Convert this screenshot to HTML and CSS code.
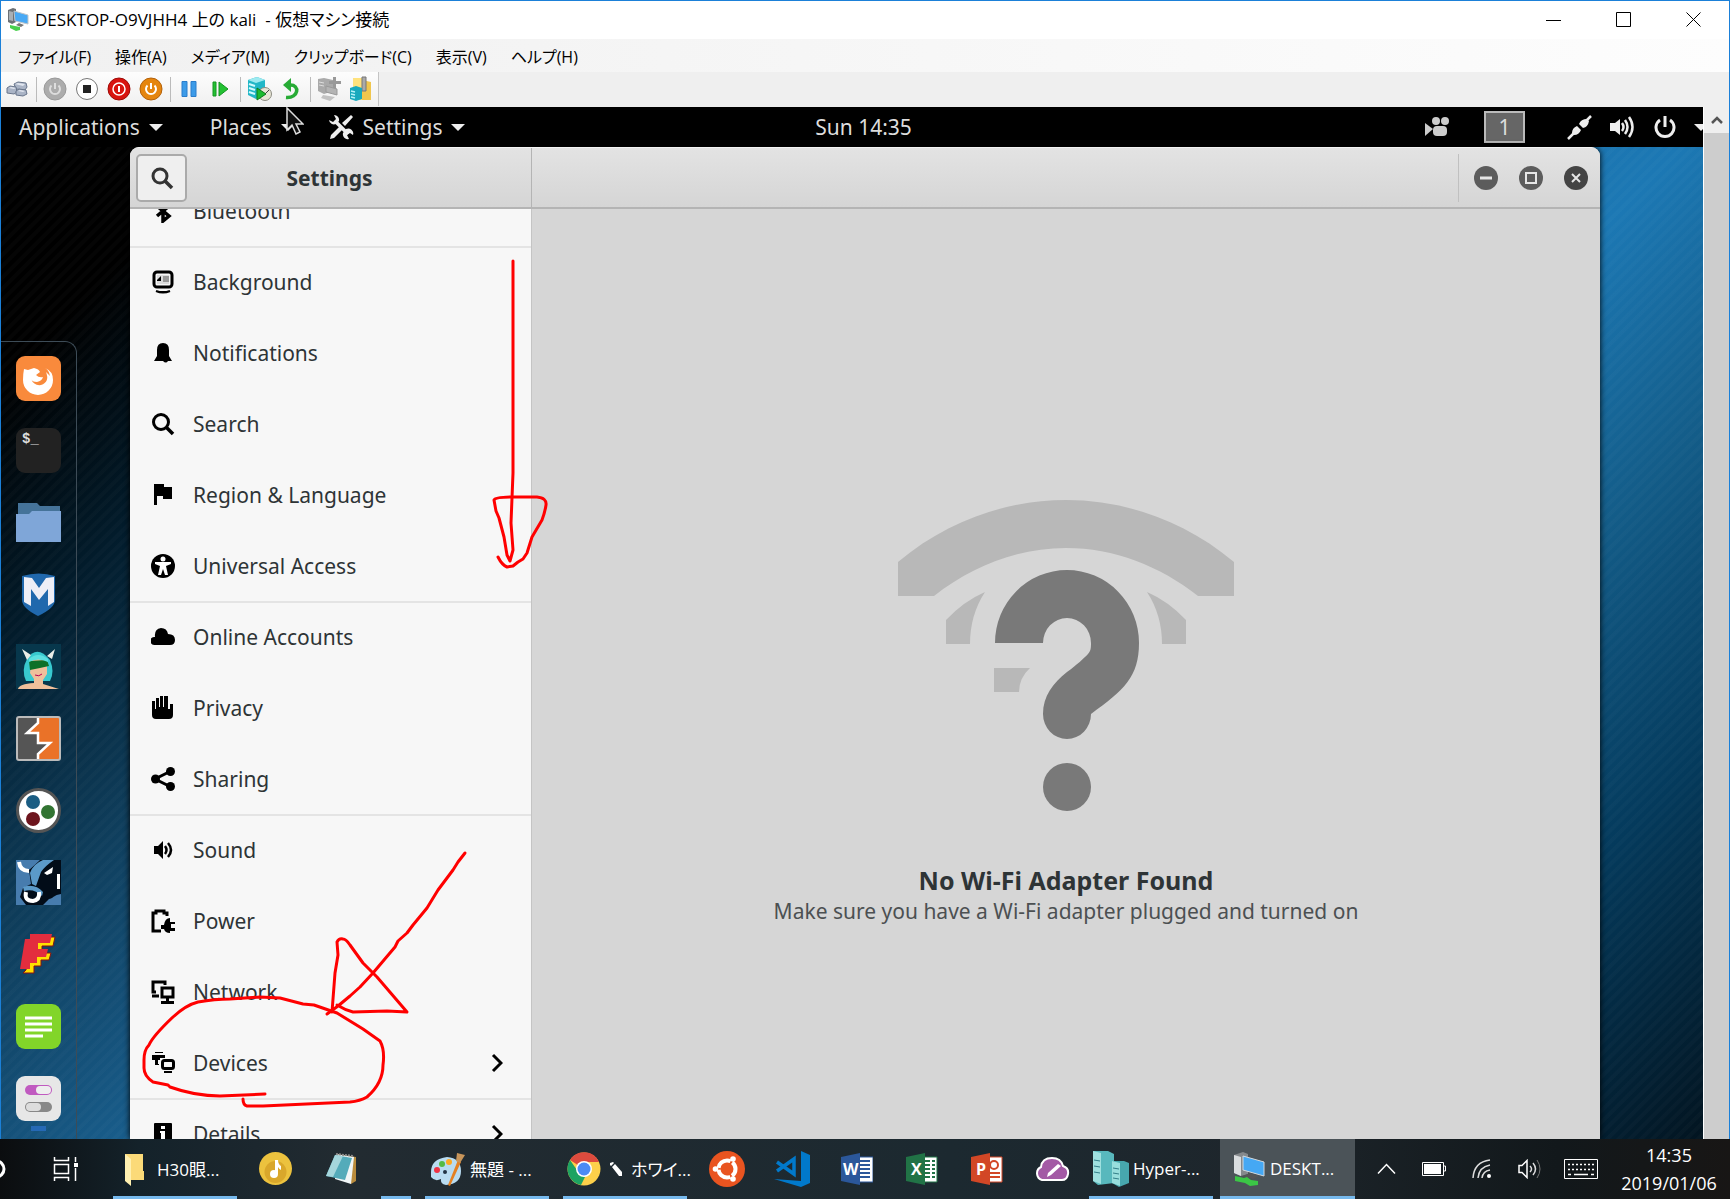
FILE: index.html
```html
<!DOCTYPE html>
<html lang="ja">

<head>
    <meta charset="UTF-8">
    <meta name="viewport" content="width=device-width, initial-scale=1.0">
    <title>DESKTOP-O9VJHH4 上の kali - 仮想マシン接続</title>
    <link rel="stylesheet" href="styles.css">
</head>

<body>
    <div class="vmconnect">
        <header class="titlebar">
            <svg width="22" height="24" viewBox="0 0 22 24">
                <path d="M1 2l5-2 3 1v13l-4 2-4-2z" fill="#6b7075" />
                <path d="M2 3l4 1v9l-4-1z" fill="#a9afb4" />
                <path d="M7 3l14 4v9L8 13z" fill="#48a9f5" stroke="#bfc5c9" />
                <path d="M12 15l5 2-3 2-5-2z" fill="#777" />
                <path d="M3 17l10 2v3l-4 1-6-3z" fill="#48cf4d" />
            </svg>
            <h1>DESKTOP-O9VJHH4 上の kali &nbsp;- 仮想マシン接続</h1>
            <div class="win-buttons">
                <button aria-label="minimize"><svg width="16" height="16"><path d="M0 8.500H15" /></svg></button>
                <button aria-label="maximize"><svg width="16" height="16"><path d="M.5.5h14v14H.5z" /></svg></button>
                <button aria-label="close"><svg width="16" height="16"><path d="M.5.5l14 14M14.500.5l-14 14" /></svg></button>
            </div>
        </header>

        <nav class="menubar">
            <button>ファイル(F)</button>
            <button>操作(A)</button>
            <button>メディア(M)</button>
            <button>クリップボード(C)</button>
            <button>表示(V)</button>
            <button>ヘルプ(H)</button>
        </nav>

        <div class="toolbar">
            <div class="tools">
                <button aria-label="Ctrl+Alt+Del"><svg width="24" height="24" viewBox="0 0 24 24">
                    <g fill="#aab4c6" stroke="#68758b">
                        <path d="M9 7l4-2 8 1 1 4-2 3-9-1z" /><path d="M2 11l3-2 6 1 1 5-3 2-7-1z" /><path d="M11 14l3-2 7 1 1 4-4 2-7-1z" />
                    </g>
                    <path d="M10 7l3-1 7 1-2 2zM4 11l2-1 5 1-2 1zM13 14l2-1 5 1-2 1z" fill="#e1e6ef" />
                </svg></button>
                <i></i>
                <button aria-label="start"><svg width="24" height="24" viewBox="0 0 24 24"><circle cx="12" cy="12" r="11" fill="#acacac" stroke="#999" /><path d="M8.500 8.500a5 5 0 1 0 7 0M12 6v6" fill="none" stroke="#ddd" stroke-width="2" /></svg></button>
                <button aria-label="turn off"><svg width="24" height="24" viewBox="0 0 24 24"><circle cx="12" cy="12" r="10.500" fill="#fff" stroke="#777" /><path d="M8 8h8v8H8z" fill="#222" /></svg></button>
                <button aria-label="shut down"><svg width="24" height="24" viewBox="0 0 24 24"><circle cx="12" cy="12" r="11" fill="#d8140f" stroke="#9d0b08" /><circle cx="12" cy="12" r="6" fill="none" stroke="#fff" stroke-width="1.500" /><path d="M12 9v6" stroke="#fff" stroke-width="2" /></svg></button>
                <button aria-label="save"><svg width="24" height="24" viewBox="0 0 24 24"><circle cx="12" cy="12" r="11" fill="#e5850e" stroke="#b3610a" /><path d="M8.500 8.500a5 5 0 1 0 7 0M12 6v6" fill="none" stroke="#fff" stroke-width="2" /></svg></button>
                <i></i>
                <button aria-label="pause"><svg width="24" height="24" viewBox="0 0 24 24"><path d="M5 4.500h5v15H5zM14 4.500h5v15h-5z" fill="#3c9be8" stroke="#2b7dcb" /></svg></button>
                <button aria-label="reset"><svg width="24" height="24" viewBox="0 0 24 24"><path d="M4 5h3v14H4zM10 5l9 7-9 7z" fill="#23c132" stroke="#149421" /></svg></button>
                <i></i>
                <button aria-label="checkpoint"><svg width="26" height="26" viewBox="0 0 26 26">
                    <path d="M2 4l9-3 8 3v15l-9 4-8-4z" fill="#22b7c7" /><path d="M2 4l9-3 8 3-9 3z" fill="#9deaf0" />
                    <path d="M3 8l6 2M3 12l6 2M3 16l6 2" stroke="#d2fbff" stroke-width="2" />
                    <circle cx="19" cy="18" r="6.500" fill="#e8e5d5" stroke="#8b8b80" /><path d="M19 18l4-4" stroke="#444" />
                    <path d="M11 12l9 6-9 6z" fill="#1dbb2f" stroke="#0d7a1a" />
                </svg></button>
                <button aria-label="revert"><svg width="24" height="24" viewBox="0 0 24 24"><path d="M7 20.500c13 1 14-13 4-12.500" fill="none" stroke="#27ab35" stroke-width="3.500" /><path d="M4 8l8-7v14z" fill="#27ab35" /></svg></button>
                <i></i>
                <button aria-label="enhanced session"><svg width="24" height="24" viewBox="0 0 24 24"><path d="M1 2l6-1 9 2v11l-9 3-6-3z" fill="#aaa" /><path d="M2 5l5 1M2 8l5 1" stroke="#ddd" /><path d="M16 0h3v4h5v3h-5v5h-3V7h-4V4h4z" fill="#999" /><path d="M9 9l11 3v6L9 15z" fill="#b4b4b4" stroke="#999" /><path d="M6 18l12 2-5 4-9-3z" fill="#c2c2c2" /></svg></button>
                <button aria-label="share"><svg width="24" height="26" viewBox="0 0 24 26"><path d="M4 2h9v22H4z" fill="#ffe27d" /><path d="M13 4l9 2v18h-9z" fill="#f0c64d" /><path d="M13 1h4v14h-4z" fill="#aaa" stroke="#777" /><path d="M1 12l6-2 6 2v11l-6 2-6-2z" fill="#19a9bd" /><path d="M2 15l4 1M2 18l4 1M2 21l4 1" stroke="#b4f2f8" stroke-width="1.500" /></svg></button>
            </div>
        </div>

        <div class="viewport">
            <div class="screen">
                <div class="topbar">
                    <div class="top-menus">
                        <button>Applications <b class="caret"></b></button>
                        <button>Places <b class="caret"></b></button>
                        <button class="app-menu"><svg width="26" height="26" viewBox="0 0 26 26"><path d="M7 7l13 13" stroke="#eee" stroke-width="3.500" /><path d="M1 6a5 5 0 0 0 7 4l3-3A5 5 0 0 0 6 1l2 4-3 3zM15 19a5 5 0 0 0 6 6l-2-4 3-2 3 2a5 5 0 0 0-7-6z" fill="#eee" /><path d="M23 1l2 2-8 9-3-3zM12 12l3 3-9 9-4 1 1-4z" fill="#eee" /></svg>Settings <b class="caret"></b></button>
                    </div>
                    <div class="clock">Sun 14:35</div>
                    <div class="status">
                        <svg width="24" height="20" viewBox="0 0 24 20"><path d="M0 6l8 6-8 7z" fill="#ccc" /><rect x="8" y="9" width="14" height="10" rx="4" fill="#ccc" /><circle cx="11" cy="4" r="4" fill="#ccc" /><circle cx="20" cy="4" r="4" fill="#ccc" /></svg>
                        <span class="workspace">1</span>
                        <svg width="25" height="25" viewBox="0 0 25 25"><path d="M1 24l6-6M18 7l6-6" stroke="#eee" stroke-width="2.500" /><path d="M5 18q0-5 5-7l4 4q-2 5-7 5zM12 9q2-5 8-5l2 2q-1 6-6 7z" fill="#eee" /></svg>
                        <svg width="26" height="24" viewBox="0 0 26 24"><path d="M0 8h5l5-4v16l-5-4H0z" fill="#eee" /><path d="M12 8q3 4 0 8M15 5q5 7 0 14M19 2q7 10 0 20" fill="none" stroke="#eee" stroke-width="2.500" /></svg>
                        <svg width="22" height="24" viewBox="0 0 22 24"><path d="M6 5a9 9 0 1 0 10 0M11 1v11" fill="none" stroke="#eee" stroke-width="3" /></svg>
                        <b class="caret"></b>
                    </div>
                </div>

                <div class="desktop">
                    <div class="dock">
                        <!-- firefox -->
                        <svg viewBox="0 0 45 45"><rect width="45" height="45" rx="9" fill="#f98a3c" /><path d="M8 13l4 1 6-2q5 1 6 4l-4 3q3 3 7 2-1 4-6 5-5 0-6-3 3 7 10 6 9-3 5-13l4 4q-1-6-5-8 8 3 8 12a15 15 0 0 1-30 0q0-6 1-11z" fill="#fff" /></svg>
                        <!-- terminal -->
                        <svg viewBox="0 0 45 45"><rect width="45" height="45" rx="9" fill="#222" /><text x="6" y="15" class="prompt">$_</text></svg>
                        <!-- files -->
                        <svg viewBox="0 0 45 45"><path d="M2 3h19l3 3h20v12H2z" fill="#457399" /><path d="M0 14h13l3-3h29v31H0z" fill="#7fa6d8" /></svg>
                        <!-- metasploit -->
                        <svg viewBox="0 0 45 45"><path d="M6 4q17-5 33 0v24q0 8-17 16Q6 36 6 28z" fill="#2068ad" /><path d="M8 5l8 1 7 10 7-10 8-1v25l-6 4V17l-9 11-8-11v17l-7-4z" fill="#eeeef6" /></svg>
                        <!-- armitage -->
                        <svg viewBox="0 0 45 45"><path fill="#07374c" d="M0 0h45v45H0z" /><path d="M10 37Q5 26 11 15q10-15 23 1 5 12 0 21z" fill="#38c9cf" /><path d="M16 15h15v15l-4 6v4l16 5H2q1-5 16-6v-4l-4-6z" fill="#f0c09b" /><path d="M13 17l18-1 2 6-9 2-10 2z" fill="#0c7027" /><path d="M13 15q9-8 19 0v3q-10-5-19 0z" fill="#5be0e0" /><path d="M6 5l9 6-4 5zM39 5l-8 7 5 3z" fill="#e9eee7" /><path d="M19 31q4 2 7-1" stroke="#b05" fill="none" /></svg>
                        <!-- burp suite -->
                        <svg viewBox="0 0 45 45"><path fill="#555" d="M1 1h21v43H1z" /><path fill="#ea7228" d="M22 1h22v43H22z" /><path d="M22 1v6L11 17h11z" fill="#ea7228" /><path d="M22 27h12L22 38z" fill="#555" /><path d="M22 1v6L11 17h11v10h12L22 38v6" fill="none" stroke="#fff" stroke-width="2.500" /><rect x="1" y="1" width="43" height="43" rx="2" fill="none" stroke="#bbb" stroke-width="2" /></svg>
                        <!-- maltego -->
                        <svg viewBox="0 0 45 45"><circle cx="22.500" cy="22.500" r="21" fill="#fff" stroke="#555" stroke-width="3" /><circle cx="17" cy="14" r="7" fill="#1b5d83" /><circle cx="32" cy="24" r="7" fill="#327432" /><circle cx="17" cy="31" r="7" fill="#6d151d" /></svg>
                        <!-- beef -->
                        <svg viewBox="0 0 45 45"><path fill="#477cae" d="M0 0h45v45H0z" /><path d="M13 10Q20 4 24 0h21v36l-12 3-6 6H10l-6-8 3-9 8-4z" fill="#020c18" /><path d="M14 13q3-9 13-13h11q-9 6-13 12l-5 14-4-2zM7 27q12-4 20 5l-1 4q-8-8-18-5z" fill="#5b9ac9" /><path d="M45 34q-9 1-15 11h15z" fill="#477cae" /><path d="M3 2q1 9 10 9" fill="none" stroke="#fff" stroke-width="4" /><path d="M10 32q-2 9 7 9 7-1 6-9" fill="none" stroke="#fff" stroke-width="4" /><path d="M28 13l9-6-1 6-5 2zM41 14h3v15h-3z" fill="#fff" /></svg>
                        <!-- faraday -->
                        <svg viewBox="0 0 45 45"><path d="M17 5h22l-2 9H26v7h9l-2 7h-8v6h-7v7H7l3-3 5-29z" fill="#ffe000" stroke="#811" /><path d="M14 2h22l-2 9H22v6h10l-2 8h-9v6h-7v6H4L9 7h5z" fill="#e32d3e" /></svg>
                        <!-- notes -->
                        <svg viewBox="0 0 45 45"><rect width="45" height="45" rx="9" fill="#82d529" /><path d="M9 14h27M9 20h27M9 26h27M9 32h18" stroke="#fff" stroke-width="3" /></svg>
                        <!-- tweaks -->
                        <svg viewBox="0 0 45 45"><rect width="45" height="45" rx="9" fill="#e7e7e7" /><rect x="9" y="9" width="27" height="10" rx="5" fill="#c05ac0" /><rect x="20" y="10" width="15" height="8" rx="4" fill="#eee" /><rect x="9" y="26" width="27" height="10" rx="5" fill="#888" /><rect x="10" y="27" width="15" height="8" rx="4" fill="#ddd" /></svg>
                        <b class="indicator"></b>
                    </div>

                    <div class="settings">
                        <div class="headerbar">
                            <div class="header-side">
                                <button class="search" aria-label="Search"><svg width="24" height="24" viewBox="0 0 24 24"><circle cx="10" cy="10" r="7" fill="none" stroke="#333" stroke-width="3" /><path d="M15 15l7 7" stroke="#333" stroke-width="3.500" /></svg></button>
                                <h2>Settings</h2>
                            </div>
                            <div class="header-main">
                                <div class="controls">
                                    <button aria-label="minimize"><svg width="24" height="24"><circle cx="12" cy="12" r="12" fill="#5c5c5c" /><path d="M6 12h12" stroke="#e6e6e6" stroke-width="3" /></svg></button>
                                    <button aria-label="maximize"><svg width="24" height="24"><circle cx="12" cy="12" r="12" fill="#5c5c5c" /><path d="M7 7h10v10H7z" fill="none" stroke="#e6e6e6" stroke-width="2" /></svg></button>
                                    <button aria-label="close"><svg width="24" height="24"><circle cx="12" cy="12" r="12" fill="#444" /><path d="M8 8l8 8M16 8l-8 8" stroke="#e6e6e6" stroke-width="2" /></svg></button>
                                </div>
                            </div>
                        </div>
                        <div class="body">
                            <nav class="panels">
                                <ul>
                                    <li><a href="#"><svg viewBox="0 0 24 24"><path d="M6 7l12 10-6 5V2l6 5L6 17" fill="none" stroke="#000" stroke-width="3.500" /></svg>Bluetooth</a></li>
                                </ul>
                                <ul>
                                    <li><a href="#"><svg viewBox="0 0 24 24"><rect x="3" y="2" width="18" height="15" rx="3" fill="none" stroke="#000" stroke-width="3" /><path d="M6 5h12v9H6z" fill="#ddd" /><path d="M6 10l4-4v5H6z" /><path d="M12 6h6v6h-6z" fill="#999" /><path d="M5 21q7 3 14 0" stroke="#000" stroke-width="2" /></svg>Background</a></li>
                                    <li><a href="#"><svg viewBox="0 0 24 24"><path d="M3 20l3-5V9q0-7 6-7t6 7v6l3 5z" /><path d="M12 20h5q-2 3-5 0" /></svg>Notifications</a></li>
                                    <li><a href="#"><svg viewBox="0 0 24 24"><circle cx="10" cy="10" r="7.500" fill="none" stroke="#000" stroke-width="3" /><path d="M15 15l7 7" stroke="#000" stroke-width="3.500" /></svg>Search</a></li>
                                    <li><a href="#"><svg viewBox="0 0 24 24"><path d="M3 1h10v3h8v12h-9v-3H6v9H3z" /></svg>Region &amp; Language</a></li>
                                    <li><a href="#"><svg viewBox="0 0 24 24"><circle cx="12" cy="12" r="12" /><circle cx="12" cy="5" r="2.500" fill="#fff" /><path d="M4 8h16v2l-5 2 2 9h-3l-2-6-2 6H7l2-9-5-2z" fill="#fff" /></svg>Universal Access</a></li>
                                </ul>
                                <ul>
                                    <li><a href="#"><svg viewBox="0 0 24 24"><path d="M4 20a4 4 0 0 1-1-8h1q-1-8 6-9 6 0 7 6 7 0 7 6 0 5-5 5z" /></svg>Online Accounts</a></li>
                                    <li><a href="#"><svg viewBox="0 0 24 24"><path d="M1 5h3v8h1V2h3v9h1V0h3v11h1V0h4v13h2V8h3v11q0 4-4 4H5q-4 0-4-4z" /></svg>Privacy</a></li>
                                    <li><a href="#"><svg viewBox="0 0 24 24"><path d="M20 4L4 12l16 8" fill="none" stroke="#000" stroke-width="3" /><circle cx="4.500" cy="12" r="4.500" /><circle cx="19.500" cy="4.500" r="4.500" /><circle cx="19.500" cy="19.500" r="4.500" /></svg>Sharing</a></li>
                                </ul>
                                <ul>
                                    <li><a href="#"><svg viewBox="0 0 24 24"><path d="M3 8h4l5-5v18l-5-5H3z" /><path d="M14 8q3 4 0 8M17 5q6 7 0 14" fill="none" stroke="#000" stroke-width="2.500" /></svg>Sound</a></li>
                                    <li><a href="#"><svg viewBox="0 0 24 24"><path d="M10 22H2V4h3V2h8v2h3v3" fill="none" stroke="#000" stroke-width="3" /><path d="M19 9v4h5v2h-4v4h4v3h-5v2q-5 0-6-4h-3v-4h3q1-7 6-7z" /></svg>Power</a></li>
                                    <li><a href="#"><svg viewBox="0 0 24 24"><path d="M14 5V2H2v10h3M1 16h7M11 8h11v9H11zM16.500 17v5M10 22.500h13" fill="none" stroke="#000" stroke-width="3" /></svg>Network</a></li>
                                    <li><a href="#"><svg viewBox="0 0 24 24"><path d="M4 1h8v1H4zM1 4h13v3H9v2H7v4h1v1H4V9H1z" /><rect x="11.500" y="9.500" width="11" height="8" rx="2" fill="none" stroke="#000" stroke-width="3" /><path d="M13 20h8v2h-8z" /></svg>Devices <svg class="chev" viewBox="0 0 12 20"><path d="M2 2l8 8-8 8" fill="none" stroke="#000" stroke-width="3" /></svg></a></li>
                                </ul>
                                <ul>
                                    <li><a href="#"><svg viewBox="0 0 24 24"><rect x="3" y="1" width="18" height="22" rx="1" /><path d="M10 4h4v3h-4zM9 9h5v9h2v2H8v-2h2v-7H9z" fill="#fff" /></svg>Details <svg class="chev" viewBox="0 0 12 20"><path d="M2 2l8 8-8 8" fill="none" stroke="#000" stroke-width="3" /></svg></a></li>
                                </ul>
                            </nav>
                            <main class="empty">
                                <svg width="336" height="312" viewBox="0 0 336 312">
                                    <g fill="#b8b8b8">
                                        <path d="M0 62C50 20 110 0 168 0S286 20 336 62V96H300C262 66 216 48 168 48S74 66 36 96H0Z" />
                                        <path d="M48 144V120Q66 101 87 92Q72 115 72 144Z" />
                                        <path d="M288 144V120Q270 101 249 92Q264 115 264 144Z" />
                                        <path d="M96 168H132Q121 178 121 192H96Z" />
                                    </g>
                                    <path d="M97 143a72 73 0 0 1 144 0c0 34-15 47-48 71a24 25 0 0 1-48 0c0-18 10-31 24-42 11-8 16-13 21-18 3-3 3-7 3-11a24 25 0 0 0-48 0z" fill="#797979" />
                                    <circle cx="169" cy="287" r="24" fill="#797979" />
                                </svg>
                                <h3>No Wi-Fi Adapter Found</h3>
                                <p>Make sure you have a Wi-Fi adapter plugged and turned on</p>
                            </main>
                        </div>
                    </div>
                </div>
                <svg class="pointer" width="18" height="28" viewBox="0 0 18 28"><path d="M1 1v22l5-5 4 9 4-2-4-8h7z" fill="#111" stroke="#ddd" stroke-width="1.500" /></svg>
            </div>
            <div class="scrollbar">
                <button aria-label="scroll up"><svg width="12" height="8"><path d="M1 7l5-5 5 5" fill="none" stroke="#555" stroke-width="2.500" /></svg></button>
                <div class="thumb"></div>
            </div>
        </div>
    </div>

    <footer class="taskbar">
        <button class="task cortana" aria-label="cortana"><svg width="20" height="20"><circle cx="10" cy="10" r="8" fill="none" stroke="#fff" stroke-width="3" /></svg></button>
        <button class="task view" aria-label="task view"><svg width="26" height="24" viewBox="0 0 26 24"><path d="M1.500 0v3.500h14V0M1.500 7.500h14v9h-14zM1.500 24v-3.500h14V24M22.500 0v5M22.500 11v13" fill="none" stroke="#fff" stroke-width="1.500" /><path d="M21 6h4v4h-4z" fill="#fff" /></svg></button>
        <button class="task labelled open explorer"><svg width="36" height="34" viewBox="0 0 36 34"><path d="M8 2h18v17h1v9H13z" fill="#fbda78" /><path d="M8 2l6 5v27l-6-5z" fill="#fff0b0" /></svg>H30眼...</button>
        <button class="task" aria-label="music"><svg width="33" height="33" viewBox="0 0 33 33"><circle cx="16.500" cy="16.500" r="16.500" fill="#ecc23e" /><circle cx="16.500" cy="20" r="11" fill="#d9a72b" /><circle cx="15" cy="22" r="4" fill="#fff" /><path d="M16 8h3q0 4 3 6v4q-2-1-3-3v7h-3z" fill="#fff" /></svg></button>
        <button class="task" aria-label="notepad"><svg width="34" height="34" viewBox="0 0 34 34"><path d="M12 2l20 3v24l-5 3z" fill="#b98b3c" /><path d="M12 2l18 3-3 27-16-5z" fill="#f1f6f7" /><path d="M11 3l17 3-7 22-19-4z" fill="#54abba" /><path d="M11 3l8 1-10 21-7-1z" fill="#a5d6dc" /><path d="M12 2l18 2" stroke="#888" stroke-width="2" stroke-dasharray="2 1" /></svg></button>
        <button class="task blank open" aria-label="more"></button>
        <button class="task labelled open paint"><svg width="36" height="34" viewBox="0 0 36 34"><path d="M2 20Q2 7 18 5q14 1 14 14 0 13-15 14-6-1-5-6-6 3-10-2z" fill="#b9dcf1" /><circle cx="8" cy="18" r="3" fill="#e34" /><circle cx="13" cy="12" r="3" fill="#5b4" /><circle cx="20" cy="10" r="3" fill="#fa2" /><circle cx="16" cy="20" r="2" fill="#234" /><path d="M29 8l3 2-11 24-2-1z" fill="#e48122" /><path d="M28 1l8 2-5 8-4-2z" fill="#c8955a" /></svg>無題 - ...</button>
        <button class="task labelled open chrome"><svg width="34" height="34" viewBox="0 0 34 34"><circle cx="17" cy="17" r="16.500" fill="#fdd04a" /><path d="M17 17L3 8a16.500 16.500 0 0 1 29 2H17z" fill="#dd4b3e" /><path d="M3 8l9 13 6 4-4 8A16.500 16.500 0 0 1 3 8z" fill="#1da362" /><circle cx="17" cy="17" r="8" fill="#fff" /><circle cx="17" cy="17" r="6.500" fill="#4c8bf5" /></svg><svg width="14" height="14" viewBox="0 0 14 14"><path d="M1 1l3-1 1 1-3 3-1-1zM6 2l7 8v4h-3L3 5z" fill="#fff" /></svg>ホワイ...</button>
        <button class="task" aria-label="ubuntu"><svg width="36" height="36" viewBox="0 0 36 36"><circle cx="18" cy="18" r="18" fill="#e95420" /><circle cx="18" cy="18" r="8.500" fill="none" stroke="#fff" stroke-width="4" stroke-dasharray="15.800 2" stroke-dashoffset="7.900" /><circle cx="6.500" cy="18" r="2.800" fill="#fff" /><circle cx="24" cy="8" r="2.800" fill="#fff" /><circle cx="24" cy="28" r="2.800" fill="#fff" /></svg></button>
        <button class="task" aria-label="vs code"><svg width="36" height="36" viewBox="0 0 36 36"><path d="M27 0l9 4v28l-9 4L0 28l27 2z" fill="#0179cb" /><path d="M3 11l17 12V8L3 20" fill="none" stroke="#0179cb" stroke-width="3.500" /></svg></button>
        <button class="task" aria-label="word"><svg width="32" height="32" viewBox="0 0 32 32"><path d="M16 4h16v25H16z" fill="#fff" stroke="#2b579a" /><path d="M19 8h10M19 12h10M19 16h10M19 20h10M19 24h10" stroke="#2b579a" stroke-width="2" /><path d="M0 4l19-4v32L0 28z" fill="#2b579a" /><text x="2" y="22" class="office">W</text></svg></button>
        <button class="task" aria-label="excel"><svg width="32" height="32" viewBox="0 0 32 32"><path d="M16 4h15v25H16z" fill="#fff" stroke="#217346" /><path d="M19 8h10M19 12h10M19 16h10M19 20h10M19 24h10" stroke="#217346" stroke-width="2" /><path d="M25 6v20" stroke="#fff" stroke-width="2" /><path d="M0 4l19-4v32L0 28z" fill="#217346" /><text x="5" y="22" class="office">X</text></svg></button>
        <button class="task" aria-label="powerpoint"><svg width="32" height="32" viewBox="0 0 32 32"><path d="M16 4h15v25H16z" fill="#fff" stroke="#d24726" /><circle cx="23" cy="12" r="4" fill="none" stroke="#d24726" stroke-width="2" /><path d="M19 20h10M19 24h10" stroke="#d24726" stroke-width="2" /><path d="M0 4l19-4v32L0 28z" fill="#d24726" /><text x="5" y="22" class="office">P</text></svg></button>
        <button class="task" aria-label="cloud memo"><svg width="36" height="26" viewBox="0 0 36 26"><path d="M8 24a7 7 0 0 1-1-13q1-9 11-9 9 0 11 8 6 2 5 8-1 6-6 6z" fill="#a359a5" stroke="#fff" stroke-width="2" /><path d="M13 21l1-4L24 8l3 2-10 9z" fill="#fff" /></svg></button>
        <button class="task labelled open hyperv"><svg width="36" height="36" viewBox="0 0 36 36"><path d="M0 0h15l6 3v29L5 34l-5-4z" fill="#58b8bd" /><path d="M0 0l8 2v31l-8-3z" fill="#9fe0df" /><path d="M19 10h12l5 2v20l-10 4-7-4z" fill="#47a7ae" /><path d="M19 10l8 2v23l-8-3z" fill="#98dedd" /><path d="M1 9l6 1M1 15l6 1M1 21l6 1M20 17l6 1M20 22l6 1M20 27l6 1" stroke="#327e88" /></svg>Hyper-...</button>
        <button class="task labelled open active"><svg width="32" height="34" viewBox="0 0 32 34"><path d="M1 3l9-3 5 2v20l-7 2-7-3z" fill="#85898c" /><path d="M1 3l7 2v19l-7-3z" fill="#dadddf" /><path d="M10 4l21 6v14L10 18z" fill="#45a8f4" stroke="#d3d8dc" /><path d="M17 21l9 3-6 3-10-3z" fill="#555" /><path d="M2 24l9 2 3-1 4 3 7 1v4l-8 1-5-3-10-2z" fill="#3bc646" /></svg>DESKT...</button>

        <div class="tray">
            <button aria-label="show hidden icons"><svg width="19" height="12"><path d="M1 10.500l8.500-9 8.500 9" fill="none" stroke="#fff" stroke-width="1.500" /></svg></button>
            <button aria-label="battery"><svg width="24" height="14"><path d="M.5.5h21v13H.5zM22 4h1.500v5H22" fill="none" stroke="#fff" /><path d="M2 2h17v10H2z" fill="#fff" /></svg></button>
            <button aria-label="network"><svg width="20" height="20" viewBox="0 0 20 20"><path d="M1 19Q2 3 18 1M6 19Q7 8 18 6M10 19Q11 12 18 11" fill="none" stroke="#ddd" stroke-width="1.500" /><circle cx="17" cy="17" r="2" fill="#fff" /></svg></button>
            <button aria-label="volume"><svg width="24" height="20" viewBox="0 0 24 20"><path d="M1 6.500h3l5-5v17l-5-5H1z" fill="none" stroke="#fff" stroke-width="1.500" /><path d="M12 7q3 3 0 6M15 4q5 6 0 12" fill="none" stroke="#ddd" stroke-width="1.500" /><path d="M19 1q6 9 0 18" fill="none" stroke="#777" /></svg></button>
            <button class="keyboard" aria-label="keyboard"><svg width="34" height="20"><path d="M.5.5h33v19H.5z" fill="none" stroke="#fff" /><path d="M4 5.500h26M4 10.500h26" stroke="#fff" stroke-width="1.500" stroke-dasharray="2 2" /><path d="M4 15.500h3M10 15.500h14M27 15.500h3" stroke="#fff" stroke-width="1.500" /></svg></button>
            <button class="date">14:35<br>2019/01/06</button>
        </div>
    </footer>

    <!-- red pen marks over the screen -->
    <svg class="ink">
        <path d="M513 261L513 357L513 473L511 523L513 550L510 561L507 555L504 537L499 518L496 511L494 500Q495 497 513 497L537 497Q547 498 546 505Q545 512 542 520L532 537L527 553L523 559L518 562L513 566L507 567Q502 565 498 557" />
        <path d="M465 853L458 862L453 870L438 890L427 908L413 925L407 933L398 941L395 947L373 973L360 987L350 996L338 1006L327 1014M332 1012L335 973L338 955L337 942Q339 938 343 939Q346 939 350 945L363 963L377 977L407 1012L387 1011L353 1012Q345 1010 337 1005" />
        <path d="M265 1094L220 1096Q195 1096 170 1087L168 1085L153 1082Q144 1076 144 1068V1060Q144 1050 149 1045Q153 1036 173 1017Q186 1005 198 1002Q215 999 230 999L260 997L280 998L303 1004L314 1005L337 1013L350 1021L363 1029L380 1041Q385 1050 383 1065Q383 1083 367 1097Q360 1101 350 1102L263 1106L247 1106Q243 1105 243 1099" />
    </svg>
</body>

</html>
```
FILE: styles.css
```css
* {
    box-sizing: border-box;
}

body {
    display: flex;
    flex-direction: column;
    height: 100vh;
    margin: 0;
    overflow: hidden;
    font-family: "Open Sans", "Noto Sans CJK JP", sans-serif;
    font-size: 17px;
    color: #000;
}

button {
    display: flex;
    align-items: center;
    justify-content: center;
    flex-shrink: 0;
    margin: 0;
    padding: 0;
    border: 0;
    background: none;
    color: inherit;
    font: inherit;
    white-space: nowrap;
}

svg {
    flex-shrink: 0;
}

h1,
h2,
h3,
p,
ul {
    margin: 0;
    padding: 0;
}

/* hyper-v window */
.vmconnect {
    display: flex;
    flex-direction: column;
    flex: 1;
    min-height: 0;
    border: 1px solid #1b80d8;
    border-bottom: 0;
    background-color: #efefef;
}

.titlebar {
    display: flex;
    align-items: center;
    height: 38px;
    padding-left: 6px;
    background-color: #fff;
}

.titlebar h1 {
    flex: 1;
    margin-left: 6px;
    font-size: 17px;
    font-weight: normal;
    line-height: 36px;
    font-feature-settings: "palt";
}

.win-buttons {
    display: flex;
}

.win-buttons button {
    width: 70px;
    height: 38px;
}

.win-buttons path {
    fill: none;
    stroke: #000;
}

.menubar {
    display: flex;
    gap: 24px;
    height: 33px;
    padding-left: 17px;
    background: linear-gradient(90deg, #f0f0f0, #fdfdfd);
    font-size: 16px;
    font-feature-settings: "palt";
}

.toolbar {
    height: 35px;
}

.tools {
    display: flex;
    align-items: center;
    width: 378px;
    height: 34px;
    border-right: 1px solid #c4c4c4;
    background: linear-gradient(#fdfdfd, #f0f0f0);
}

.tools button {
    width: 32px;
}

.tools i {
    width: 1px;
    height: 25px;
    margin: 0 2px 0 3px;
    background-color: #bbb;
}

.viewport {
    display: flex;
    flex: 1;
    min-height: 0;
}

.screen {
    position: relative;
    display: flex;
    flex-direction: column;
    flex: 1;
    min-width: 0;
    overflow: hidden;
    background:
        repeating-linear-gradient(135deg, rgba(255, 255, 255, 0.02) 0 3px, transparent 4px 7px, rgba(255, 255, 255, 0.02) 8px),
        linear-gradient(135deg, #000 10%, #021c2c 20%, #0f3f5e 31%, #185c8a 42%, #1b70aa 52%, #1c78b4 63%, #135c88 74%, #043a5c 86%, #021420);
}

.scrollbar {
    display: flex;
    flex-direction: column;
    width: 26px;
    border-left: 1px solid #fff;
}

.scrollbar button {
    height: 26px;
}

.thumb {
    flex: 1;
    background-color: #cdcdcd;
}

/* gnome top bar, the guest screen is a bit wider than the view */
.topbar {
    display: grid;
    grid-template-columns: 1fr auto 1fr;
    align-items: center;
    flex-shrink: 0;
    width: calc(100% + 26px);
    height: 40px;
    padding: 0 21px 0 18px;
    background-color: #000;
    color: #ddd;
    font-family: "Noto Sans", sans-serif;
    font-size: 21px;
}

.top-menus,
.status {
    display: flex;
    align-items: center;
}

.top-menus {
    gap: 47px;
}

.top-menus button {
    gap: 9px;
}

.top-menus .app-menu {
    margin-left: -14px;
}

.caret {
    border: 7px solid transparent;
    border-top-color: #eee;
    border-bottom-width: 0;
}

.status {
    justify-content: flex-end;
    gap: 18px;
}

.workspace {
    width: 41px;
    margin: 0 24px 0 17px;
    border: 2px solid #bbb;
    background-color: #666;
    line-height: 28px;
    text-align: center;
}

.desktop {
    display: flex;
    flex: 1;
    min-height: 0;
    padding-right: 103px;
}

.dock {
    display: flex;
    flex-direction: column;
    align-items: center;
    gap: 27px;
    flex-shrink: 0;
    width: 76px;
    margin-top: 194px;
    padding-top: 14px;
    border: 1px solid #3d4c57;
    border-width: 1px 1px 0 0;
    border-radius: 0 12px 0 0;
}

.dock svg {
    width: 45px;
    height: 45px;
}

.dock .indicator {
    width: 15px;
    height: 5px;
    margin-top: -22px;
    background-color: #2569b5;
}

.prompt {
    fill: #ddd;
    font: bold 14px "Liberation Mono", monospace;
}

/* settings window */
.settings {
    display: flex;
    flex-direction: column;
    flex: 1;
    min-width: 0;
    margin-left: 53px;
    border-radius: 9px 9px 0 0;
    background-color: #d6d6d6;
    box-shadow: 0 0 6px #000;
    color: #2e3436;
    font-family: "Noto Sans", sans-serif;
    overflow: hidden;
}

.headerbar {
    display: flex;
    flex-shrink: 0;
    height: 62px;
    border-top: 1px solid #f4f4f4;
    border-bottom: 2px solid #b4b4b4;
    background: linear-gradient(#e3e3e3, #d5d5d5);
}

.header-side {
    display: flex;
    align-items: center;
    width: 402px;
    padding: 0 59px 0 6px;
    border-right: 1px solid #b4b4b4;
}

.header-side h2 {
    flex: 1;
    font-size: 21px;
    text-align: center;
}

.search {
    width: 51px;
    height: 48px;
    border: 2px solid #aaa;
    border-radius: 5px;
    background-color: #efefef;
}

.header-main {
    display: flex;
    align-items: center;
    justify-content: flex-end;
    flex: 1;
}

.controls {
    display: flex;
    gap: 21px;
    padding: 12px 12px 12px 15px;
    border-left: 1px solid #c0c0c0;
}

.body {
    display: flex;
    flex: 1;
    min-height: 0;
}

.panels {
    width: 402px;
    border-right: 1px solid #c4c4c4;
    background-color: #f7f7f7;
    overflow: hidden;
}

.panels ul {
    list-style: none;
}

/* the list is scrolled down */
.panels ul:first-child {
    margin-top: -32px;
}

.panels li {
    height: 71px;
}

.panels ul li:last-child {
    border-bottom: 2px solid #e4e4e4;
}

.panels a {
    display: flex;
    align-items: center;
    height: 68px;
    padding: 0 28px 0 21px;
    color: inherit;
    font-size: 21px;
    text-decoration: none;
}

.panels svg {
    width: 24px;
    height: 24px;
    margin-right: 18px;
}

.panels .chev {
    width: 12px;
    height: 20px;
    margin: 0 0 0 auto;
}

.empty {
    display: flex;
    flex-direction: column;
    align-items: center;
    flex: 1;
    padding-top: 291px;
}

.empty h3 {
    margin-top: 51px;
    font-size: 25px;
    line-height: 34px;
}

.empty p {
    color: #4c5052;
    font-size: 21px;
    line-height: 28px;
}

.pointer {
    position: absolute;
    top: 0;
    left: 285px;
}

/* windows taskbar */
.taskbar {
    display: flex;
    flex-shrink: 0;
    height: 60px;
    background: linear-gradient(90deg, #0b0d0f, #14222a 8%, #222b31 20%, #1c2930 55%, #1e262c 72%, #12181b 90%, #181615);
    color: #fff;
    font-feature-settings: "palt";
}

.task {
    width: 65px;
    border-bottom: 3px solid transparent;
    border-top: 2px solid transparent;
}

.cortana {
    justify-content: flex-end;
    width: 33px;
    padding-right: 27px;
}

.view {
    margin-right: 15px;
}

.labelled {
    justify-content: flex-start;
    gap: 5px;
    width: 124px;
    padding-left: 4px;
}

.open {
    border-bottom-color: #76b9ed;
}

.explorer {
    gap: 4px;
    margin-right: 6px;
}

.blank {
    width: 30px;
    margin: 0 14px 0 8px;
}

.paint {
    margin-right: 14px;
}

.chrome {
    gap: 8px;
    margin-right: 7px;
}

.hyperv {
    gap: 4px;
    margin: 0 7px 0 5px;
}

.active {
    width: 135px;
    padding-left: 13px;
    background-color: #4b5358;
}

.office {
    fill: #fff;
    font: bold 16px "Open Sans", sans-serif;
}

.tray {
    display: flex;
    margin-left: auto;
}

.tray button {
    width: 48px;
}

.tray .keyboard {
    width: 54px;
}

.tray .date {
    width: 122px;
    font-size: 18px;
    line-height: 28px;
}

.ink {
    position: absolute;
    top: 0;
    left: 0;
    width: 100%;
    height: 100%;
    pointer-events: none;
}

.ink path {
    fill: none;
    stroke: #f00;
    stroke-width: 3px;
    stroke-linecap: round;
    stroke-linejoin: round;
}
```
